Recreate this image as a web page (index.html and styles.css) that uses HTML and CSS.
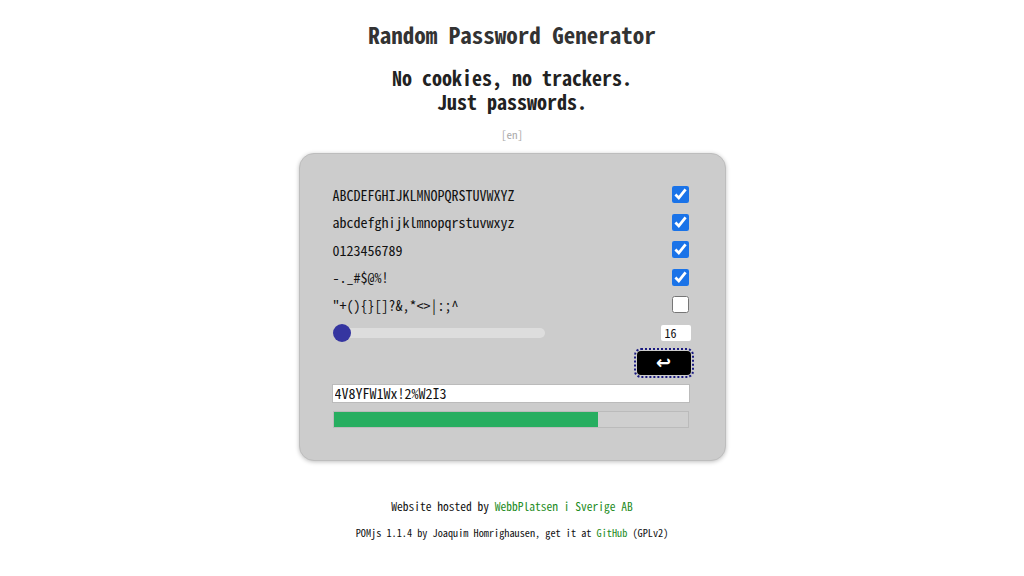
FILE: index.html
```html
<!DOCTYPE html>
<html lang="en">
<head>
<meta charset="utf-8">
<title>Random Password Generator</title>
<link rel="stylesheet" href="styles.css">
</head>
<body>
<header class="head">
  <h1 class="title">Random Password Generator</h1>
  <h2 class="subtitle"><span class="sub-line">No cookies, no trackers.</span><span class="sub-line">Just passwords.</span></h2>
  <div class="lang">[en]</div>
</header>
<main class="card">
  <div class="row"><span>ABCDEFGHIJKLMNOPQRSTUVWXYZ</span><input type="checkbox" class="chk" checked></div>
  <div class="row"><span>abcdefghijklmnopqrstuvwxyz</span><input type="checkbox" class="chk" checked></div>
  <div class="row"><span>0123456789</span><input type="checkbox" class="chk" checked></div>
  <div class="row"><span>-._#$@%!</span><input type="checkbox" class="chk" checked></div>
  <div class="row"><span>"+(){}[]?&amp;,*&lt;&gt;|:;^</span><input type="checkbox" class="chk"></div>
  <div class="row slider-row">
    <input type="range" class="range" min="16" max="64" value="16">
    <input type="text" class="num" value="16">
  </div>
  <div class="btn-row">
    <button class="gen" type="button">&#8617;</button>
  </div>
  <input type="text" class="pw" value="4V8YFW1Wx!2%W2I3">
  <div class="meter"><div class="meter-fill" style="width: 74.7%"></div></div>
</main>
<footer class="foot">
  <p class="foot-host">Website hosted by <a href="#">WebbPlatsen i Sverige AB</a></p>
  <p class="foot-credit">POMjs 1.1.4 by Joaquim Homrighausen, get it at <a href="#">GitHub</a> (GPLv2)</p>
</footer>
</body>
</html>
```
FILE: styles.css
```css
html, body {
  margin: 0;
  padding: 0;
  background: #fff;
}
body {
  font-family: "Noto Sans Mono CJK JP", "Noto Sans CJK JP", "DejaVu Sans Mono", monospace;
  color: #222;
  display: flex;
  flex-direction: column;
  align-items: center;
}
.head {
  text-align: center;
  padding-top: 19px;
}
.title {
  font-size: 23px;
  font-weight: bold;
  margin: 0;
  line-height: 30px;
  color: #333;
}
.subtitle {
  font-size: 20px;
  font-weight: bold;
  margin: 17px 0 0;
  color: #222;
}
.sub-line {
  display: block;
  line-height: 24px;
}
.lang {
  font-size: 11px;
  color: #aaa;
  margin-top: 13px;
  line-height: 14px;
}
.card {
  box-sizing: border-box;
  width: 427px;
  margin-top: 12px;
  background: #cccccc;
  border: 1px solid #bdbdbd;
  border-radius: 15px;
  box-shadow: 0 1px 4px rgba(0,0,0,0.25);
  padding: 27px 35px 32px 33px;
  display: flex;
  flex-direction: column;
}
.row {
  display: flex;
  justify-content: space-between;
  align-items: center;
  height: 27.5px;
  font-size: 14px;
  color: #111;
}
.chk {
  width: 17px;
  height: 17px;
  margin: 0 1px 0 0;
  accent-color: #1a73e8;
}
.slider-row {
  height: 28px;
  margin-right: -2px;
}
.range {
  -webkit-appearance: none;
  appearance: none;
  width: 212px;
  height: 10px;
  background: #dddddd;
  border-radius: 5px;
  margin: 0;
  outline: none;
}
.range::-webkit-slider-thumb {
  -webkit-appearance: none;
  appearance: none;
  width: 18px;
  height: 18px;
  border-radius: 50%;
  background: #3535a0;
  cursor: pointer;
}
.num {
  box-sizing: border-box;
  width: 30px;
  height: 16px;
  border: none;
  border-radius: 2px;
  background: #fff;
  font-family: inherit;
  font-size: 12px;
  padding: 0 4px;
  margin: 0 1px 0 0;
  color: #111;
}
.btn-row {
  display: flex;
  justify-content: flex-end;
  padding: 4px 0 9px;
  margin-right: -1px;
}
.gen {
  width: 54px;
  height: 24px;
  background: #000;
  color: #fff;
  border: none;
  border-radius: 4px;
  font-size: 18px;
  font-weight: bold;
  line-height: 24px;
  padding: 0;
  outline: 2px dotted #1a1a80;
  outline-offset: 1px;
  font-family: "DejaVu Sans", sans-serif;
}
.pw {
  box-sizing: border-box;
  width: 358px;
  height: 19px;
  border: 1px solid #bbb;
  background: #fff;
  font-family: inherit;
  font-size: 14px;
  padding: 0 2px;
  margin: 0 0 0 -1px;
  color: #111;
}
.meter {
  box-sizing: border-box;
  width: 356px;
  height: 17px;
  margin-top: 8px;
  border: 1px solid #bbb;
  background: #cfcfcf;
}
.meter-fill {
  height: 100%;
  background: #27ae60;
}
.foot {
  text-align: center;
  color: #111;
  margin-top: 38px;
}
.foot p {
  margin: 0 0 13px;
  line-height: 14px;
}
.foot-host {
  font-size: 11.5px;
}
.foot-credit {
  font-size: 10.25px;
}
.foot a {
  color: #1e8c1e;
  text-decoration: none;
}
```
